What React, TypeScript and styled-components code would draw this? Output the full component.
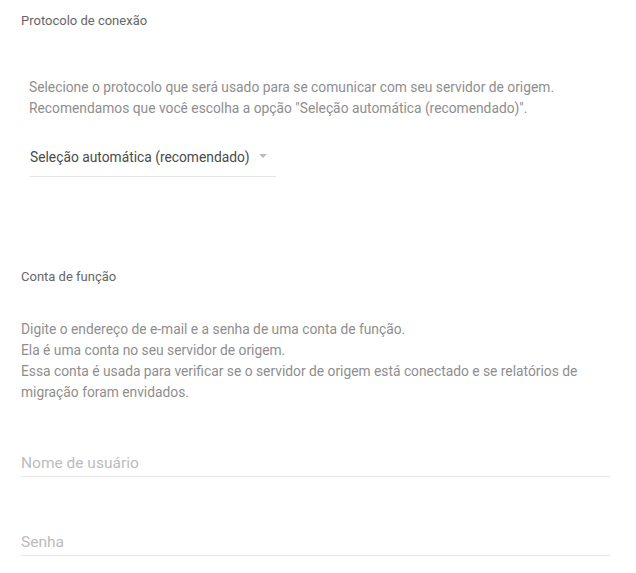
import React from "react";
import styled, { createGlobalStyle } from "styled-components";

const GlobalStyle = createGlobalStyle`
  html, body {
    margin: 0;
    padding: 0;
    background: #ffffff;
  }
  body {
    font-family: Roboto, "Liberation Sans", Arial, sans-serif;
  }
`;

const Page = styled.div`
  display: flex;
  flex-direction: column;
  padding: 13px 26px 0 21px;
`;

const SectionTitle = styled.h2<{ $top?: number }>`
  margin: ${(p) => p.$top ?? 0}px 0 0 0;
  font-size: 13px;
  line-height: 16px;
  font-weight: 400;
  color: #666666;
`;

const Description = styled.div<{ $top: number; $indent?: number }>`
  margin: ${(p) => p.$top}px 0 0 ${(p) => p.$indent ?? 0}px;
  font-size: 13.8px;
  line-height: 21px;
  color: #8e8e8e;
`;

const Line = styled.div``;

const SelectBox = styled.div`
  display: flex;
  align-items: center;
  width: 246px;
  margin: 28px 0 0 9px;
  padding-bottom: 9px;
  border-bottom: 1px solid #e4e4e4;
  cursor: pointer;
`;

const SelectValue = styled.span`
  font-size: 13.8px;
  line-height: 20px;
  color: #4a4a4a;
`;

const Caret = styled.span`
  width: 0;
  height: 0;
  margin: 0 0 3px 9px;
  border-left: 4.5px solid transparent;
  border-right: 4.5px solid transparent;
  border-top: 4px solid #bdbdbd;
`;

const TextInput = styled.input<{ $top: number }>`
  display: block;
  width: 100%;
  box-sizing: border-box;
  margin: ${(p) => p.$top}px 0 0 0;
  padding: 0 0 3px 0;
  border: none;
  border-bottom: 1px solid #e6e6e6;
  outline: none;
  background: transparent;
  font-family: Roboto, "Liberation Sans", Arial, sans-serif;
  font-size: 15.5px;
  line-height: 20px;
  height: 24px;
  color: #333333;

  &::placeholder {
    color: #bcbcbc;
  }
`;

export default function App() {
  return (
    <>
      <GlobalStyle />
      <Page>
        <SectionTitle>Protocolo de conexão</SectionTitle>
        <Description $top={48} $indent={8}>
          <Line>Selecione o protocolo que será usado para se comunicar com seu servidor de origem.</Line>
          <Line>Recomendamos que você escolha a opção "Seleção automática (recomendado)".</Line>
        </Description>
        <SelectBox>
          <SelectValue>Seleção automática (recomendado)</SelectValue>
          <Caret />
        </SelectBox>

        <SectionTitle $top={92}>Conta de função</SectionTitle>
        <Description $top={34}>
          <Line>Digite o endereço de e-mail e a senha de uma conta de função.</Line>
          <Line>Ela é uma conta no seu servidor de origem.</Line>
          <Line>
            Essa conta é usada para verificar se o servidor de origem está conectado e se relatórios de
            migração foram envidados.
          </Line>
        </Description>
        <TextInput $top={50} placeholder="Nome de usuário" />
        <TextInput $top={55} type="password" placeholder="Senha" />
      </Page>
    </>
  );
}
